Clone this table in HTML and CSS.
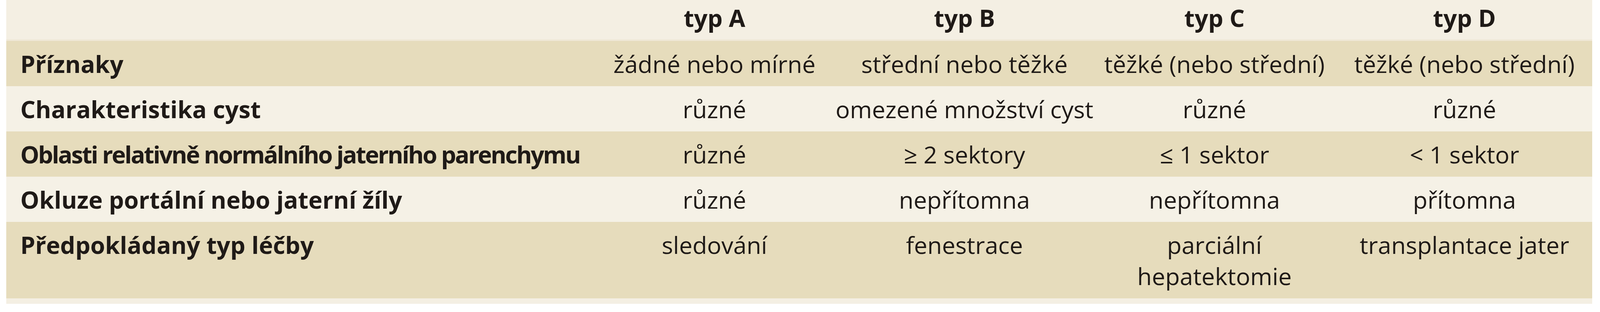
FILE: index.html
```html
<!DOCTYPE html>
<html lang="cs">
<head>
<meta charset="utf-8">
<title>Klasifikace</title>
<link rel="stylesheet" href="styles.css">
</head>
<body>
<div class="table">
  <div class="row head">
    <div class="cell label"></div>
    <div class="cell"><span>typ A</span></div>
    <div class="cell"><span>typ B</span></div>
    <div class="cell"><span>typ C</span></div>
    <div class="cell"><span>typ D</span></div>
  </div>
  <div class="row dark">
    <div class="cell label">Příznaky</div>
    <div class="cell"><span>žádné nebo mírné</span></div>
    <div class="cell"><span>střední nebo těžké</span></div>
    <div class="cell"><span>těžké (nebo střední)</span></div>
    <div class="cell"><span>těžké (nebo střední)</span></div>
  </div>
  <div class="row light">
    <div class="cell label">Charakteristika cyst</div>
    <div class="cell"><span>různé</span></div>
    <div class="cell"><span>omezené množství cyst</span></div>
    <div class="cell"><span>různé</span></div>
    <div class="cell"><span>různé</span></div>
  </div>
  <div class="row dark">
    <div class="cell label tight">Oblasti relativně normálního jaterního parenchymu</div>
    <div class="cell"><span>různé</span></div>
    <div class="cell"><span>≥ 2 sektory</span></div>
    <div class="cell"><span>≤ 1 sektor</span></div>
    <div class="cell"><span>&lt; 1 sektor</span></div>
  </div>
  <div class="row light">
    <div class="cell label">Okluze portální nebo jaterní žíly</div>
    <div class="cell"><span>různé</span></div>
    <div class="cell"><span>nepřítomna</span></div>
    <div class="cell"><span>nepřítomna</span></div>
    <div class="cell"><span>přítomna</span></div>
  </div>
  <div class="row dark">
    <div class="cell label">Předpokládaný typ léčby</div>
    <div class="cell"><span>sledování</span></div>
    <div class="cell"><span>fenestrace</span></div>
    <div class="cell"><span>parciální<br>hepatektomie</span></div>
    <div class="cell"><span>transplantace jater</span></div>
  </div>
</div>
</body>
</html>
```
FILE: styles.css
```css
html, body {
  margin: 0;
  padding: 0;
  background: #ffffff;
}

.table {
  margin-left: 16px;
  width: 4060px;
  background: #f4efe3;
  padding-bottom: 14px;
  font-family: "Open Sans", "Noto Sans", sans-serif;
  font-size: 61px;
  line-height: 80px;
  color: #1f1a17;
}

.row {
  display: grid;
  grid-template-columns: 1493px repeat(4, 640px) 7px;
}

.row.head {
  font-weight: 700;
  border-bottom: 4px solid #efe8d6;
}

.row.dark {
  background: #e6dcbc;
}

.row.light {
  background: #f5f1e6;
}

.cell {
  display: flex;
  justify-content: center;
  align-items: flex-start;
  padding: 19px 0 17px;
  white-space: nowrap;
  text-align: center;
}

.row.head .cell {
  padding: 6px 0 15px;
}

.cell.label {
  justify-content: flex-start;
  padding-left: 36px;
  font-weight: 700;
  text-align: left;
}

.cell.tight {
  letter-spacing: -0.05em;
}
```
